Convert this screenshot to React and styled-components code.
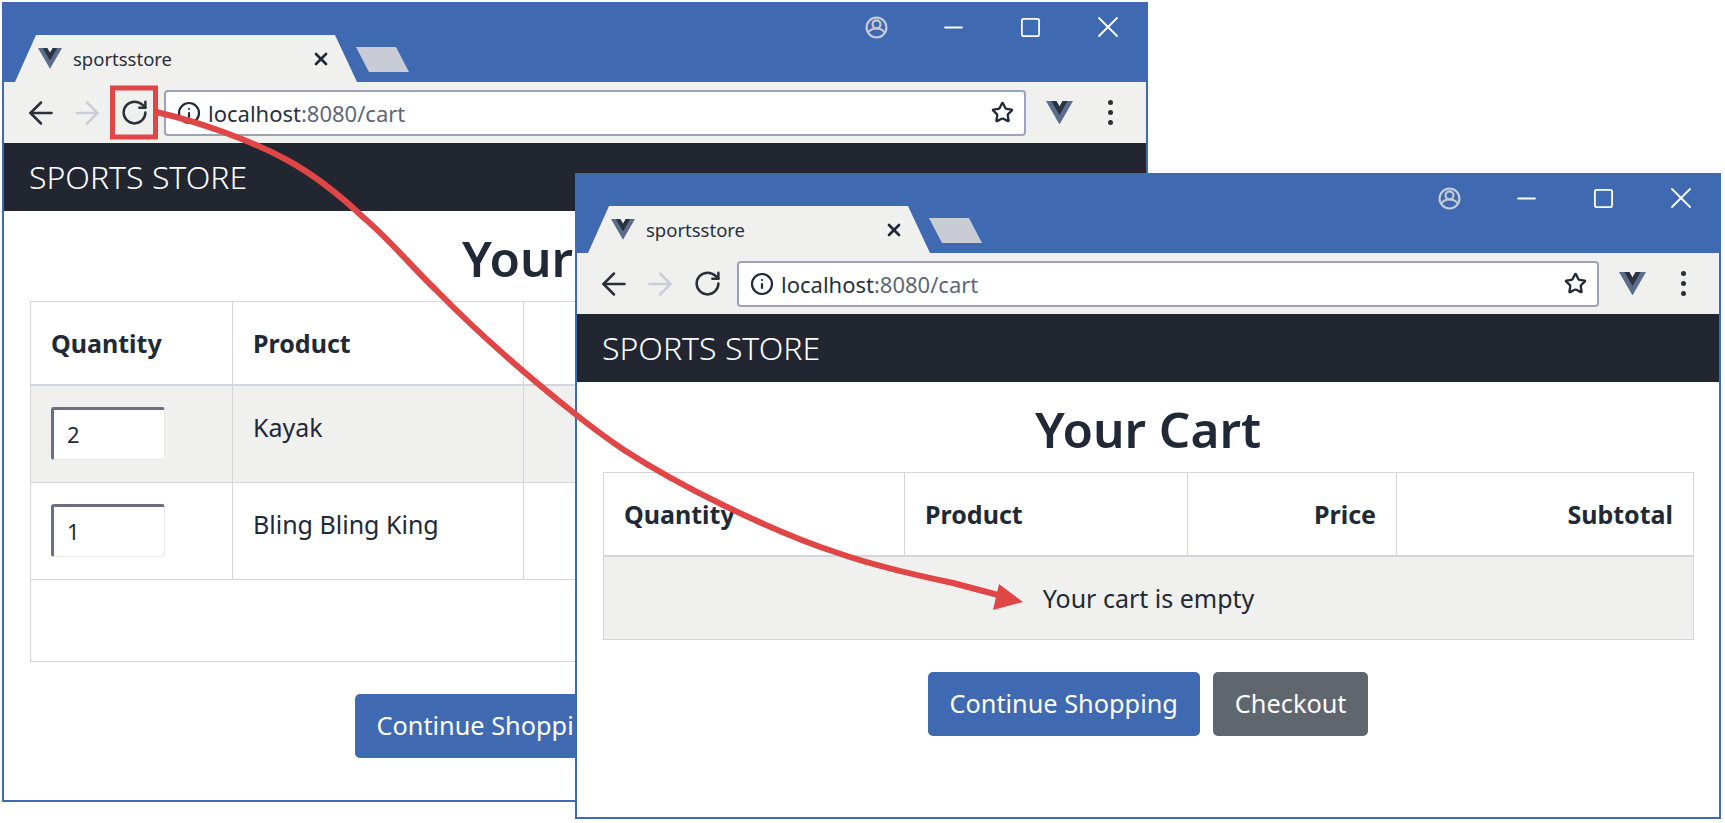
import styled, { createGlobalStyle } from 'styled-components';
import { ArrowLeft, ArrowRight, RotateCw, Info, Star, X, Minus, Square } from 'lucide-react';

const pageFont = `"Noto Sans", "Open Sans", sans-serif`;

const leftRows = [
  { qty: 2, name: 'Kayak', striped: true },
  { qty: 1, name: 'Bling Bling King' },
];

const VueMark = ({ size }) => (
  <svg width={ size } height={ size * 0.87 } viewBox="0 0 261.76 226.69">
    <path fill="#5a6d8c" d="M161.096.001l-30.225 52.351L100.647.001H-.005l130.877 226.688L261.749.001z" />
    <path fill="#2b3240" d="M161.096.001l-30.225 52.351L100.647.001H52.346l78.526 136.01L209.398.001z" />
  </svg>
);

const ProfileIcon = () => (
  <svg width="23" height="23" viewBox="0 0 22 22" fill="none" stroke="#c8ccd6" strokeWidth="2">
    <circle cx="11" cy="11" r="9.500" />
    <circle cx="11" cy="8" r="3.800" />
    <path d="M3.500 15.500c2-3 5-3.500 7.500-3.500s5.500 .5 7.500 3.500" />
  </svg>
);

const BrowserWindow = ({ offset, bodyHeight, columns, rows }) => (
  <Frame $x={ offset.x } $y={ offset.y } $bodyHeight={ bodyHeight }>
    <TitleBar>
      <Tab>
        <VueMark size={ 24 } />
        <TabTitle>sportsstore</TabTitle>
        <TabClose><X size={ 20 } strokeWidth={ 3.2 } /></TabClose>
      </Tab>
      <NewTab />
      <Controls>
        <ControlSlot><ProfileIcon /></ControlSlot>
        <ControlSlot><Minus size={ 29 } strokeWidth={ 1.8 } absoluteStrokeWidth /></ControlSlot>
        <ControlSlot><Square size={ 23 } strokeWidth={ 1.8 } absoluteStrokeWidth /></ControlSlot>
        <ControlSlot><X size={ 36 } strokeWidth={ 1.8 } absoluteStrokeWidth /></ControlSlot>
      </Controls>
    </TitleBar>
    <Toolbar>
      <NavIcon $width={ 46 }><ArrowLeft size={ 36 } strokeWidth={ 2.5 } absoluteStrokeWidth /></NavIcon>
      <NavIcon $width={ 46 } $disabled><ArrowRight size={ 36 } strokeWidth={ 2.5 } absoluteStrokeWidth /></NavIcon>
      <NavIcon $width={ 48 }><RotateCw size={ 29 } strokeWidth={ 2.5 } absoluteStrokeWidth /></NavIcon>
      <Omnibox>
        <Info size={ 24 } strokeWidth={ 2.2 } />
        <Url>localhost<UrlRest>:8080/cart</UrlRest></Url>
        <Star size={ 23 } strokeWidth={ 2.4 } />
      </Omnibox>
      <ExtIcon><VueMark size={ 27 } /></ExtIcon>
      <MenuDots><i /><i /><i /></MenuDots>
    </Toolbar>
    <NavBar>SPORTS STORE</NavBar>
    <Body>
      <Heading>Your Cart</Heading>
      <CartTable>
        <colgroup>
          { columns.map((w, i) => <Col key={ i } $width={ w } />) }
        </colgroup>
        <thead>
          <tr>
            <HeadCell>Quantity</HeadCell>
            <HeadCell>Product</HeadCell>
            <HeadCell $right>Price</HeadCell>
            <HeadCell $right>Subtotal</HeadCell>
          </tr>
        </thead>
        <tbody>
          { rows ? rows.map(row => (
            <tr key={ row.name }>
              <Cell $striped={ row.striped }><QtyInput>{ row.qty }</QtyInput></Cell>
              <Cell $striped={ row.striped }>{ row.name }</Cell>
              <Cell $striped={ row.striped } />
              <Cell $striped={ row.striped } />
            </tr>
          )) : (
            <tr>
              <Cell colSpan={ 4 } $striped $center>Your cart is empty</Cell>
            </tr>
          ) }
          { rows && <tr><Cell colSpan={ 4 } $blank /></tr> }
        </tbody>
      </CartTable>
      <ButtonRow>
        <Button $color="#3f6ab1">Continue Shopping</Button>
        <Button $color="#60666d">Checkout</Button>
      </ButtonRow>
    </Body>
  </Frame>
);

const App = () => (
  <Page>
    <GlobalStyle />
    <BrowserWindow offset={{ x: 2, y: 2 }} bodyHeight={ 589 } columns={ [202, 291, 209, 388] } rows={ leftRows } />
    <BrowserWindow offset={{ x: 575, y: 173 }} bodyHeight={ 435 } columns={ [301, 283, 209, 297] } />
    <Callout viewBox="0 0 1725 823">
      <rect x="112.500" y="88" width="43" height="49" fill="none" stroke="#e04646" strokeWidth="5" />
      <path
        fill="none"
        stroke="#e04646"
        strokeWidth="6"
        d="M156 112 C200 122 250 140 287 160 C320 178 345 200 364 218 C390 240 410 265 436 290 C480 335 530 378 574 413 C590 426 605 437 624 450 C655 470 690 489 723 505 C760 523 800 541 838 553 C875 566 915 575 953 583 L1002 596"
      />
      <polygon fill="#e04646" points="1023,602 999,584 993,610" />
    </Callout>
  </Page>
);

const GlobalStyle = createGlobalStyle`
  html, body {
    margin: 0;
    background: #fff;
  }
`;

const Page = styled.div`
  position: relative;
  width: 1725px;
  height: 823px;
  overflow: hidden;
  background: #fff;
  font-family: ${pageFont};
  color: #212936;
`;

const Frame = styled.div`
  position: absolute;
  left: ${props => props.$x}px;
  top: ${props => props.$y}px;
  width: 1146px;
  box-sizing: border-box;
  border: 2px solid #3f6ab1;
  border-top: 0;
  background: #fff;
  display: flex;
  flex-direction: column;
  --body-height: ${props => props.$bodyHeight}px;
`;

const TitleBar = styled.div`
  height: 80px;
  background: #3f6ab1;
  display: flex;
  align-items: flex-end;
  position: relative;
  padding-left: 11px;
`;

const Tab = styled.div`
  width: 342px;
  height: 47px;
  box-sizing: border-box;
  padding: 0 26px 0 23px;
  background: #f0f0ee;
  clip-path: polygon(0 100%, 21px 0, 320px 0, 100% 100%);
  display: flex;
  align-items: center;
  gap: 11px;
`;

const TabTitle = styled.span`
  flex: 1;
  font-size: 18.500px;
  color: #2a2f3a;
`;

const TabClose = styled.span`
  display: flex;
  color: #212936;
`;

const NewTab = styled.div`
  width: 53px;
  height: 25px;
  margin: 0 0 10px -1px;
  background: #c9ccd6;
  clip-path: polygon(0 0, 40px 0, 100% 100%, 13px 100%);
`;

const Controls = styled.div`
  position: absolute;
  top: 7px;
  right: 0;
  display: flex;
  align-items: center;
  color: #fff;
`;

const ControlSlot = styled.span`
  width: 77px;
  height: 36px;
  display: flex;
  align-items: center;
  justify-content: center;
`;

const Toolbar = styled.div`
  height: 61px;
  box-sizing: border-box;
  background: #f0f0ee;
  display: flex;
  align-items: center;
  padding: 0 33px 0 14px;
`;

const NavIcon = styled.span`
  width: ${props => props.$width}px;
  display: flex;
  justify-content: center;
  color: ${props => props.$disabled ? '#c9ced9' : '#2a2f3a'};
`;

const Omnibox = styled.div`
  flex: 1;
  height: 46px;
  margin-left: 6px;
  box-sizing: border-box;
  display: flex;
  align-items: center;
  padding: 0 10px 0 11px;
  background: #fff;
  border: 2px solid #9aa3b8;
  border-radius: 4px;
  color: #212936;
`;

const Url = styled.span`
  flex: 1;
  margin-left: 7px;
  font-size: 22px;
  color: #2a2f3a;
`;

const UrlRest = styled.span`
  color: #5f6673;
`;

const ExtIcon = styled.span`
  margin-left: 20px;
  display: flex;
`;

const MenuDots = styled.span`
  margin-left: 35px;
  display: flex;
  flex-direction: column;
  gap: 5px;

  i {
    display: block;
    width: 5px;
    height: 5px;
    border-radius: 50%;
    background: #2a2f3a;
  }
`;

const NavBar = styled.div`
  height: 68px;
  box-sizing: border-box;
  padding-left: 25px;
  background: #212630;
  color: #fff;
  font-size: 32px;
  font-weight: 300;
  line-height: 68px;
`;

const Body = styled.div`
  height: var(--body-height);
  box-sizing: border-box;
  padding: 0 26px;
`;

const Heading = styled.h2`
  margin: 0;
  height: 90px;
  text-align: center;
  font-size: 49.500px;
  font-weight: 600;
  line-height: 94px;
  color: #212936;
`;

const CartTable = styled.table`
  width: 1090px;
  table-layout: fixed;
  border-collapse: collapse;
  font-size: 25px;
  line-height: 36px;
`;

const Col = styled.col`
  width: ${props => props.$width}px;
`;

const HeadCell = styled.th`
  height: 83px;
  padding: 0 20px;
  box-sizing: border-box;
  border: 1px solid #d2d5dd;
  border-bottom-width: 2px;
  text-align: ${props => props.$right ? 'right' : 'left'};
  font-weight: 700;
`;

const Cell = styled.td`
  padding: ${props => props.$center ? '23px 20px' : props.$blank ? '0 20px' : '23px 20px 22px'};
  height: ${props => props.$blank ? '82px' : 'auto'};
  box-sizing: border-box;
  border: 1px solid #d2d5dd;
  vertical-align: ${props => props.$center ? 'middle' : 'top'};
  text-align: ${props => props.$center ? 'center' : 'left'};
  background: ${props => props.$striped ? '#f0f0ee' : '#fff'};
`;

const QtyInput = styled.div`
  width: 114px;
  height: 53px;
  box-sizing: border-box;
  padding: 0 0 0 13px;
  margin: -2px 0 0;
  background: #fff;
  border-top: 3px solid #6b7080;
  border-left: 3px solid #6b7080;
  border-right: 1px solid #e8e8e8;
  border-bottom: 1px solid #e8e8e8;
  border-radius: 3px;
  font-size: 22px;
  line-height: 48px;
`;

const ButtonRow = styled.div`
  display: flex;
  justify-content: center;
  gap: 13px;
  margin-top: 32px;
`;

const Button = styled.div`
  height: 64px;
  padding: 0 22px;
  border-radius: 5px;
  background: ${props => props.$color};
  color: #fff;
  font-size: 25.300px;
  line-height: 62px;
`;

const Callout = styled.svg`
  position: absolute;
  left: 0;
  top: 0;
  width: 1725px;
  height: 823px;
  pointer-events: none;
`;

export default App;
